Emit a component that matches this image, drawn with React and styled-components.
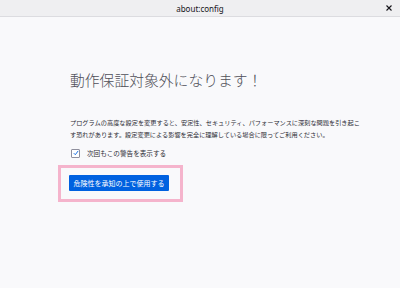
import React from 'react';
import styled, { createGlobalStyle } from 'styled-components';

const GlobalStyle = createGlobalStyle`
  html, body {
    margin: 0;
    padding: 0;
    background: #f9f9fb;
  }
  body {
    font-family: "Noto Sans", "Noto Sans CJK JP", sans-serif;
    color: #15141a;
  }
`;

const Window = styled.div`
  width: 400px;
  height: 288px;
  display: flex;
  flex-direction: column;
  background: #f9f9fb;
  overflow: hidden;
`;

const TitleBar = styled.div`
  height: 16px;
  flex: none;
  display: flex;
  align-items: center;
  justify-content: center;
  position: relative;
  background: #efeff1;
  border-bottom: 1px solid #dcdce0;
  font-size: 8px;
  color: #15141a;
`;

const CloseButton = styled.span`
  position: absolute;
  right: 8px;
  top: 5px;
  width: 6px;
  height: 6px;
  display: flex;
`;

const Content = styled.main`
  padding: 54px 0 0 70px;
  display: flex;
  flex-direction: column;
  align-items: flex-start;
`;

const Heading = styled.h1`
  margin: 0;
  font-family: "Noto Sans CJK JP", sans-serif;
  font-size: 14.8px;
  line-height: 18px;
  font-weight: 300;
  color: #4f4f58;
`;

const Paragraph = styled.p`
  margin: 28px 0 0;
  width: 292px;
  font-family: "Noto Sans CJK JP", sans-serif;
  font-size: 6.2px;
  line-height: 12px;
  color: #2b2a33;
`;

const CheckRow = styled.label`
  margin-top: 7px;
  height: 10px;
  display: flex;
  align-items: center;
  gap: 7px;
  padding-left: 1px;
  font-family: "Noto Sans CJK JP", sans-serif;
  font-size: 6.6px;
  color: #2b2a33;
`;

const Box = styled.span`
  width: 7px;
  height: 7px;
  border: 1px solid #8f8f9d;
  border-radius: 1px;
  background: #fff;
  display: flex;
  align-items: center;
  justify-content: center;
`;

const Highlight = styled.div`
  margin: 7px 0 0 -12px;
  padding: 7px 11px 8px 8px;
  border: 3px solid #f5b4cc;
  display: flex;
`;

const Button = styled.button`
  width: 100px;
  height: 16px;
  border: none;
  border-radius: 1px;
  background: #0061e0;
  color: #fff;
  font-family: "Noto Sans CJK JP", sans-serif;
  font-size: 7px;
  padding: 0;
  display: flex;
  align-items: center;
  justify-content: center;
`;

export default function App() {
  return (
    <Window>
      <GlobalStyle />
      <TitleBar>
        about:config
        <CloseButton>
          <svg width="6" height="6" viewBox="0 0 6 6">
            <path d="M0.5 0.5 L5.5 5.5 M5.5 0.5 L0.5 5.5" stroke="#15141a" strokeWidth="1.1" />
          </svg>
        </CloseButton>
      </TitleBar>
      <Content>
        <Heading>動作保証対象外になります！</Heading>
        <Paragraph>
          プログラムの高度な設定を変更すると、安定性、セキュリティ、パフォーマンスに深刻な問題を引き起こす恐れがあります。設定変更による影響を完全に理解している場合に限ってご利用ください。
        </Paragraph>
        <CheckRow>
          <Box>
            <svg width="6" height="6" viewBox="0 0 6 6">
              <path d="M0.8 3.2 L2.3 4.7 L5.2 0.9" fill="none" stroke="#0061e0" strokeWidth="0.9" />
            </svg>
          </Box>
          次回もこの警告を表示する
        </CheckRow>
        <Highlight>
          <Button>危険性を承知の上で使用する</Button>
        </Highlight>
      </Content>
    </Window>
  );
}
